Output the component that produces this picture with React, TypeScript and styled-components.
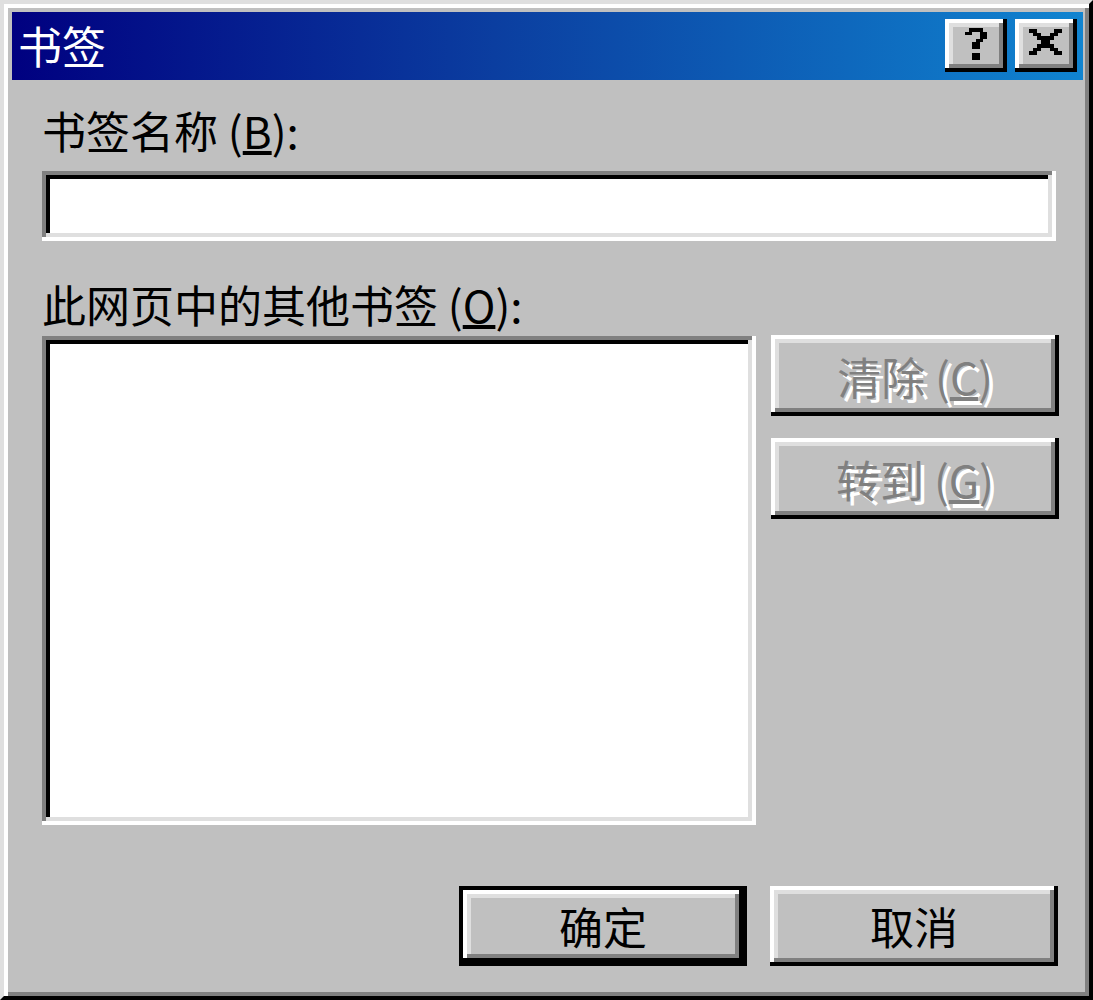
import React from "react";
import styled, { createGlobalStyle } from "styled-components";

const GlobalStyle = createGlobalStyle`
  html, body {
    margin: 0;
    padding: 0;
    background: #c0c0c0;
  }
  body {
    font-family: "Noto Sans CJK SC", "Noto Sans", sans-serif;
  }
`;

const raised = `
  box-shadow: inset -4px -4px #000, inset 4px 4px #fff,
    inset -8px -8px #808080, inset 8px 8px #dfdfdf;
`;

const sunken = `
  box-shadow: inset -4px -4px #fff, inset 4px 4px #808080,
    inset -8px -8px #dfdfdf, inset 8px 8px #000;
`;

const Window = styled.div`
  width: 1093px;
  height: 1000px;
  box-sizing: border-box;
  border: 4px solid;
  border-color: #dfdfdf #000 #000 #dfdfdf;
  box-shadow: inset 4px 4px #fff, inset -4px -4px #808080;
  padding: 8px 6px 8px 8px;
  background: #c0c0c0;
  display: flex;
  flex-direction: column;
`;

const TitleBar = styled.div`
  height: 68px;
  flex-shrink: 0;
  display: flex;
  align-items: center;
  padding: 0 6px;
  background: linear-gradient(90deg, #000080 0%, #0b3ea0 45%, #1084d0 100%);
`;

const TitleText = styled.div`
  flex: 1;
  color: #fff;
  font-size: 44px;
  line-height: 48px;
  margin-top: -3px;
`;

const TitleButtons = styled.div`
  display: flex;
  gap: 8px;
  align-self: flex-start;
  margin-top: 7px;
`;

const TitleButton = styled.button<{ $pad: string }>`
  width: 62px;
  height: 53px;
  padding: 0;
  padding: ${(p) => p.$pad};
  border: none;
  background: #c0c0c0;
  ${raised}
  display: flex;
  align-items: center;
  justify-content: center;
`;

const Body = styled.div`
  flex: 1;
  display: flex;
  flex-direction: column;
  padding: 26px 24px 0 30px;
`;

const Label = styled.div<{ $gap: number }>`
  font-size: 44px;
  line-height: 48px;
  color: #000;
  margin-top: ${(p) => p.$gap}px;
  white-space: nowrap;
`;

const Key = styled.u`
  text-decoration-thickness: 4px;
  text-underline-offset: 2px;
`;

const TextBox = styled.div`
  height: 70px;
  margin: 17px 3px 0 0;
  background: #fff;
  ${sunken}
`;

const ListRow = styled.div`
  display: flex;
  gap: 15px;
  height: 489px;
  margin-top: 8px;
`;

const ListBox = styled.div`
  width: 714px;
  background: #fff;
  ${sunken}
`;

const SideColumn = styled.div`
  flex: 1;
  display: flex;
  flex-direction: column;
  gap: 22px;
  margin-top: -1px;
`;

const Button = styled.button<{ $disabled?: boolean; $default?: boolean }>`
  height: ${(p) => (p.$default ? 80 : 81)}px;
  box-sizing: border-box;
  padding: 0;
  background: #c0c0c0;
  border: ${(p) => (p.$default ? "4px solid #000" : "none")};
  ${raised}
  font-family: "Noto Sans CJK SC", "Noto Sans", sans-serif;
  font-size: 44px;
  line-height: 48px;
  color: ${(p) => (p.$disabled ? "#808080" : "#000")};
  text-shadow: ${(p) => (p.$disabled ? "4px 4px 0 #fff" : "none")};
  display: flex;
  align-items: center;
  justify-content: center;
  white-space: nowrap;
`;

const Footer = styled.div`
  display: flex;
  justify-content: flex-end;
  gap: 23px;
  margin-top: 61px;
  padding-right: 1px;
`;

const FooterButton = styled(Button)`
  width: 288px;
  height: 80px;
`;

const Glyph = styled.svg`
  display: block;
  shape-rendering: crispEdges;
`;

const helpPixels = [
  ".XXXX.",
  "XX..XX",
  "....XX",
  "...XX.",
  "..XX..",
  "..XX..",
  "......",
  "..XX..",
  "..XX..",
];

const closePixels = [
  "XX....XX",
  ".XX..XX.",
  "..XXXX..",
  "...XX...",
  "..XXXX..",
  ".XX..XX.",
  "XX....XX",
];

const PixelGlyph = ({ rows, width, height }: { rows: string[]; width: number; height: number }) => (
  <Glyph
    width={width}
    height={height}
    viewBox={`0 0 ${rows[0].length} ${rows.length}`}
    preserveAspectRatio="none"
  >
    {rows.map((row, y) =>
      row.split("").map((c, x) =>
        c === "X" ? <rect key={`${x}-${y}`} x={x} y={y} width={1} height={1} fill="#000" /> : null
      )
    )}
  </Glyph>
);

const App = () => {
  return (
    <>
      <GlobalStyle />
      <Window>
        <TitleBar>
          <TitleText>书签</TitleText>
          <TitleButtons>
            <TitleButton $pad="0 1px 3px 0">
              <PixelGlyph rows={helpPixels} width={22} height={32} />
            </TitleButton>
            <TitleButton $pad="0 1px 8px 0">
              <PixelGlyph rows={closePixels} width={33} height={26} />
            </TitleButton>
          </TitleButtons>
        </TitleBar>
        <Body>
          <Label $gap={0}>
            书签名称 (<Key>B</Key>):
          </Label>
          <TextBox />
          <Label $gap={39}>
            此网页中的其他书签 (<Key>O</Key>):
          </Label>
          <ListRow>
            <ListBox />
            <SideColumn>
              <Button $disabled>
                清除 (<Key>C</Key>)
              </Button>
              <Button $disabled>
                转到 (<Key>G</Key>)
              </Button>
            </SideColumn>
          </ListRow>
          <Footer>
            <FooterButton $default>确定</FooterButton>
            <FooterButton>取消</FooterButton>
          </Footer>
        </Body>
      </Window>
    </>
  );
};

export default App;
